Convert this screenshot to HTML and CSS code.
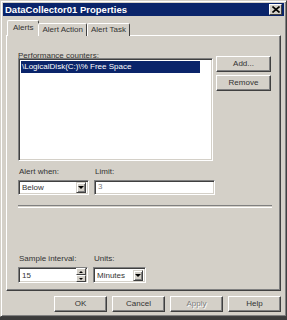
FILE: index.html
```html
<!DOCTYPE html>
<html lang="en">
  <head>
    <meta charset="UTF-8" />
    <title>DataCollector01 Properties</title>
    <link rel="stylesheet" href="styles.css">
  </head>
  <body>
    <div class="window">
      <div class="titlebar">
        <span class="title">DataCollector01 Properties</span>
        <span class="close">
          <svg width="8" height="7" viewBox="0 0 8 7">
            <path d="M0.5 0.5 L7.5 6.5 M7.5 0.5 L0.5 6.5" stroke="#000" stroke-width="1.6" />
          </svg>
        </span>
      </div>

      <div class="content">
        <div class="tabs">
          <div class="tab active">Alerts</div>
          <div class="tab">Alert Action</div>
          <div class="tab">Alert Task</div>
        </div>

        <div class="panel">
          <div class="label">Performance counters:</div>
          <div class="counters">
            <div class="listbox">
              <div class="item selected">\LogicalDisk(C:)\% Free Space</div>
            </div>
            <div class="side-buttons">
              <div class="btn">Add...</div>
              <div class="btn">Remove</div>
            </div>
          </div>

          <div class="fields">
            <div class="field">
              <div class="label">Alert when:</div>
              <div class="combo alert-combo">
                <span class="value">Below</span>
                <span class="drop"><span class="arrow"></span></span>
              </div>
            </div>
            <div class="field">
              <div class="label">Limit:</div>
              <div class="textbox limit">3</div>
            </div>
          </div>

          <div class="separator"></div>

          <div class="fields sample">
            <div class="field">
              <div class="label">Sample interval:</div>
              <div class="spin">
                <span class="value">15</span>
                <span class="spin-btns">
                  <span class="spin-btn"><span class="arrow up"></span></span>
                  <span class="spin-btn"><span class="arrow"></span></span>
                </span>
              </div>
            </div>
            <div class="field">
              <div class="label">Units:</div>
              <div class="combo units-combo">
                <span class="value">Minutes</span>
                <span class="drop"><span class="arrow"></span></span>
              </div>
            </div>
          </div>
        </div>

        <div class="dialog-buttons">
          <div class="btn">OK</div>
          <div class="btn">Cancel</div>
          <div class="btn disabled">Apply</div>
          <div class="btn">Help</div>
        </div>
      </div>
    </div>
  </body>
</html>
```

FILE: styles.css
```css
body {
  margin: 0;
  font-family: "Liberation Sans", Arial, sans-serif;
  font-size: 8px;
  color: #333;
  background: #3c3c3c;
}
.window {
  width: 287px;
  height: 317px;
  box-sizing: border-box;
  background: #d4d0c8;
  border: 1px solid;
  border-color: #d4d0c8 #404040 #404040 #d4d0c8;
  box-shadow: inset 1px 1px #fff, inset -1px -1px #808080;
  padding: 2px;
}
.titlebar {
  height: 13px;
  background: #0a246a;
  color: #fff;
  display: flex;
  align-items: center;
  justify-content: space-between;
  padding: 0 2px;
}
.title {
  font-weight: bold;
  font-size: 9.5px;
}
.close {
  width: 11px;
  height: 9px;
  background: #d4d0c8;
  border: 1px solid;
  border-color: #fff #404040 #404040 #fff;
  display: flex;
  align-items: center;
  justify-content: center;
}
.content {
  padding: 5px 3px 0 3px;
}
.tabs {
  display: flex;
  align-items: flex-end;
  height: 15px;
  padding-left: 1px;
  position: relative;
  z-index: 1;
}
.tab {
  height: 12px;
  padding: 0 3px;
  line-height: 12px;
  border: 1px solid;
  border-bottom: none;
  border-color: #fff #404040 #404040 #fff;
  border-radius: 2px 2px 0 0;
  background: #d4d0c8;
}
.tab.active {
  height: 15px;
  line-height: 14px;
  padding: 0 5px;
  margin-right: -1px;
}
.panel {
  height: 256px;
  box-sizing: border-box;
  margin-top: -1px;
  border: 1px solid;
  border-color: #fff #404040 #404040 #fff;
  box-shadow: inset -1px -1px #808080;
  padding: 15px 9px 0 11px;
}
.label {
  height: 9px;
  line-height: 9px;
}
.counters {
  display: flex;
  gap: 3px;
  margin-top: -2px;
}
.listbox {
  width: 195px;
  height: 103px;
  box-sizing: border-box;
  background: #fff;
  border: 1px solid;
  border-color: #808080 #fff #fff #808080;
  box-shadow: inset 1px 1px #404040, inset -1px -1px #d4d0c8;
  padding: 2px 12px 0 2px;
}
.item {
  height: 12px;
  line-height: 12px;
  padding-left: 1px;
}
.item.selected {
  background: #0a246a;
  color: #fff;
}
.side-buttons {
  display: flex;
  flex-direction: column;
  gap: 3px;
  margin-top: -2px;
}
.btn {
  width: 55px;
  height: 16px;
  box-sizing: border-box;
  line-height: 14px;
  text-align: center;
  background: #d4d0c8;
  border: 1px solid;
  border-color: #fff #404040 #404040 #fff;
  box-shadow: inset -1px -1px #808080;
}
.btn.disabled {
  color: #808080;
  text-shadow: 1px 1px #fff;
}
.fields {
  display: flex;
  gap: 5px;
  margin-top: 6px;
}
.field .label {
  margin-bottom: 4px;
  padding-left: 1px;
}
.combo,
.textbox,
.spin {
  height: 15px;
  box-sizing: border-box;
  background: #fff;
  border: 1px solid;
  border-color: #808080 #fff #fff #808080;
  box-shadow: inset 1px 1px #404040, inset -1px -1px #d4d0c8;
  display: flex;
  align-items: center;
  padding: 0 2px 0 3px;
}
.value {
  flex-grow: 1;
}
.alert-combo {
  width: 71px;
}
.units-combo {
  width: 53px;
  height: 16px;
}
.limit {
  width: 121px;
  color: #808080;
  align-items: flex-start;
  padding-top: 1px;
}
.drop {
  width: 10px;
  height: 11px;
  box-sizing: border-box;
  background: #d4d0c8;
  border: 1px solid;
  border-color: #d4d0c8 #404040 #404040 #d4d0c8;
  box-shadow: inset 1px 1px #fff, inset -1px -1px #808080;
  display: flex;
  align-items: center;
  justify-content: center;
}
.arrow {
  width: 0;
  height: 0;
  border-left: 3px solid transparent;
  border-right: 3px solid transparent;
  border-top: 3px solid #000;
}
.arrow.up {
  border-top: none;
  border-bottom: 3px solid #000;
}
.separator {
  height: 1px;
  margin-top: 10px;
  width: 254px;
  border-top: 1px solid #808080;
  border-bottom: 1px solid #fff;
}
.sample {
  margin-top: 46px;
}
.spin {
  width: 70px;
  height: 16px;
  padding-right: 1px;
}
.spin-btns {
  display: flex;
  flex-direction: column;
}
.spin-btn {
  width: 10px;
  height: 7px;
  box-sizing: border-box;
  background: #d4d0c8;
  border: 1px solid;
  border-color: #fff #404040 #404040 #fff;
  display: flex;
  align-items: center;
  justify-content: center;
}
.spin-btn .arrow {
  border-left-width: 2px;
  border-right-width: 2px;
  border-top-width: 2px;
}
.spin-btn .arrow.up {
  border-bottom-width: 2px;
}
.dialog-buttons {
  display: flex;
  justify-content: flex-end;
  gap: 5px;
  margin-top: 5px;
}
.dialog-buttons .btn {
  width: 53px;
}
```
